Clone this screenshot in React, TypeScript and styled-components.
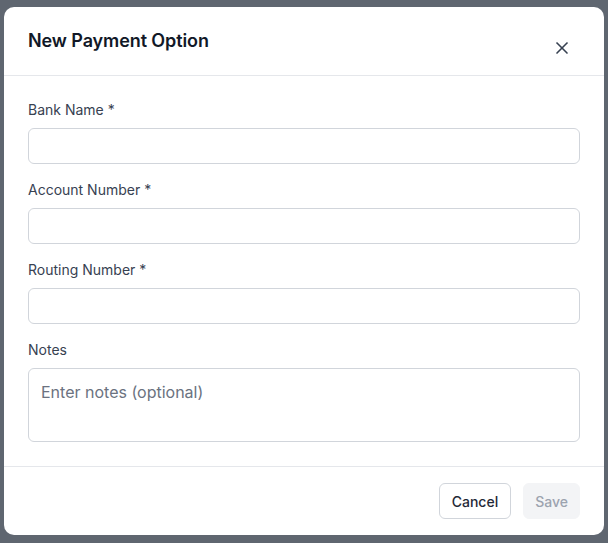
import React from "react";
import styled, { createGlobalStyle } from "styled-components";

const Global = createGlobalStyle`
  html, body { margin: 0; padding: 0; }
  body {
    background: #5f6670;
    font-family: Inter, "Noto Sans", sans-serif;
    -webkit-font-smoothing: antialiased;
  }
  * { box-sizing: border-box; }
`;

const Page = styled.div`
  width: 608px;
  height: 543px;
  padding: 7px 4px;
  display: flex;
  align-items: flex-start;
  justify-content: center;
`;

const Dialog = styled.div`
  width: 600px;
  background: #ffffff;
  border-radius: 10px;
  display: flex;
  flex-direction: column;
  overflow: hidden;
`;

const Header = styled.div`
  display: flex;
  align-items: center;
  justify-content: space-between;
  height: 69px;
  padding: 0 24px;
  border-bottom: 1px solid #e5e7eb;
`;

const Title = styled.h2`
  margin: 0;
  font-size: 18px;
  line-height: 28px;
  font-weight: 600;
  color: #111827;
  letter-spacing: -0.1px;
`;

const CloseButton = styled.button`
  width: 28px;
  height: 28px;
  margin: 7px 4px -7px 0;
  border: none;
  background: transparent;
  display: flex;
  align-items: center;
  justify-content: center;
  color: #374151;
  padding: 0;
  cursor: pointer;
`;

const Body = styled.div`
  padding: 24px;
  display: flex;
  flex-direction: column;
  gap: 16px;
`;

const Field = styled.div`
  display: flex;
  flex-direction: column;
  gap: 8px;
`;

const Label = styled.label`
  font-size: 14px;
  line-height: 20px;
  font-weight: 400;
  color: #374151;
`;

const Input = styled.input`
  height: 36px;
  width: 100%;
  border: 1px solid #d1d5db;
  border-radius: 6px;
  padding: 0 12px;
  font-family: inherit;
  font-size: 16px;
  background: #fff;
  outline: none;
`;

const TextArea = styled.textarea`
  height: 74px;
  width: 100%;
  border: 1px solid #d1d5db;
  border-radius: 6px;
  padding: 11px 12px;
  font-family: inherit;
  font-size: 16px;
  line-height: 24px;
  resize: none;
  outline: none;
  color: #111827;
  &::placeholder {
    color: #6b7280;
  }
`;

const Footer = styled.div`
  display: flex;
  justify-content: flex-end;
  gap: 12px;
  padding: 16px 24px;
  border-top: 1px solid #e5e7eb;
`;

const Button = styled.button<{ $variant: "outline" | "disabled" }>`
  height: 36px;
  padding: 0 ${(p) => (p.$variant === "outline" ? "12px" : "11px")};
  border-radius: 6px;
  font-family: inherit;
  font-size: 14px;
  font-weight: 500;
  border: 1px solid ${(p) => (p.$variant === "outline" ? "#d1d5db" : "#f3f4f6")};
  background: ${(p) => (p.$variant === "outline" ? "#ffffff" : "#f3f4f6")};
  color: ${(p) => (p.$variant === "outline" ? "#1f2937" : "#9ca3af")};
`;

export default function App() {
  return (
    <>
      <Global />
      <Page>
        <Dialog>
          <Header>
            <Title>New Payment Option</Title>
            <CloseButton aria-label="Close">
              <svg width="20" height="20" viewBox="0 0 24 24" fill="none" stroke="currentColor" strokeWidth="2" strokeLinecap="round">
                <path d="M18 6 6 18" />
                <path d="m6 6 12 12" />
              </svg>
            </CloseButton>
          </Header>
          <Body>
            <Field>
              <Label>Bank Name *</Label>
              <Input />
            </Field>
            <Field>
              <Label>Account Number *</Label>
              <Input />
            </Field>
            <Field>
              <Label>Routing Number *</Label>
              <Input />
            </Field>
            <Field>
              <Label>Notes</Label>
              <TextArea placeholder="Enter notes (optional)" />
            </Field>
          </Body>
          <Footer>
            <Button $variant="outline">Cancel</Button>
            <Button $variant="disabled" disabled>Save</Button>
          </Footer>
        </Dialog>
      </Page>
    </>
  );
}
